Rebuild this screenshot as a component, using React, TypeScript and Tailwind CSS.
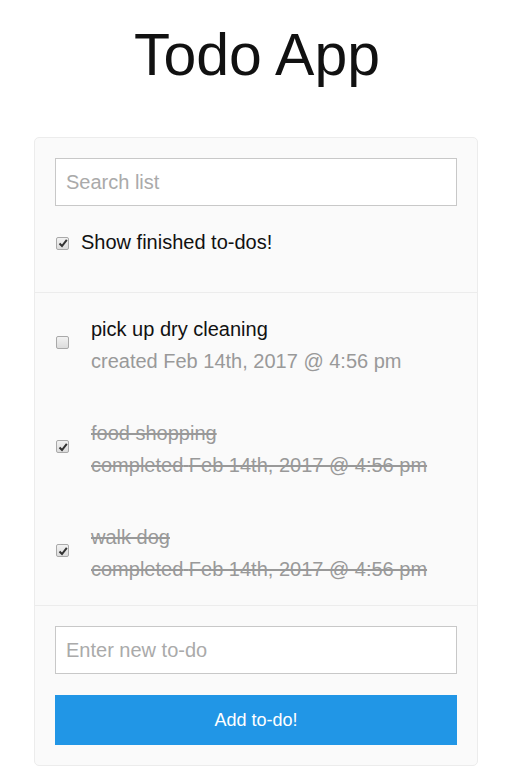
import React from "react";

const font = { fontFamily: '"Liberation Sans", Arial, sans-serif' };

function Box({ checked }: { checked: boolean }) {
  return (
    <span className="relative inline-flex size-[13px] shrink-0 items-center justify-center rounded-[2px] border border-[#a9a9a9] bg-gradient-to-b from-[#f2f2f2] to-[#dcdcdc]">
      {checked && (
        <svg viewBox="0 0 10 10" className="size-[10px]">
          <path d="M1.5 5.5 L4 8 L8.8 1.8" fill="none" stroke="#333" strokeWidth="2" />
        </svg>
      )}
    </span>
  );
}

function TodoRow({ title, date, done }: { title: string; date: string; done: boolean }) {
  return (
    <div className="flex items-center py-5">
      <div className="w-[36px] flex items-center pl-px pb-[5px]">
        <Box checked={done} />
      </div>
      <div className={done ? "text-[20px] leading-[32px] text-[#999] line-through" : "text-[20px] leading-[32px]"}>
        <div className={done ? "" : "text-[#111]"}>{title}</div>
        <div className="text-[#999]">
          {done ? "completed" : "created"} {date}
        </div>
      </div>
    </div>
  );
}

export default function App() {
  return (
    <div className="min-h-[776px] bg-white" style={font}>
      <h1 className="pt-[18px] pb-[45px] text-center text-[59px] leading-[74px] text-[#111]">Todo App</h1>

      <div className="ml-[34px] w-[444px] rounded-[5px] border border-[#ececec] bg-[#fafafa]">
        <div className="px-5 pt-5 pb-[34px] border-b border-[#ececec]">
          <input
            placeholder="Search list"
            className="h-[48px] w-full border border-[#c8c8c8] bg-white px-[10px] text-[20px] outline-none placeholder:text-[#aaa]"
            style={font}
          />
          <label className="mt-5 flex items-center text-[20px] leading-[32px] text-[#111]">
            <span className="w-[26px] flex items-center pl-px pt-[2px]">
              <Box checked />
            </span>
            Show finished to-dos!
          </label>
        </div>

        <div className="px-5">
          <TodoRow title="pick up dry cleaning" date="Feb 14th, 2017 @ 4:56 pm" done={false} />
          <TodoRow title="food shopping" date="Feb 14th, 2017 @ 4:56 pm" done />
          <TodoRow title="walk dog" date="Feb 14th, 2017 @ 4:56 pm" done />
        </div>

        <div className="border-t border-[#ececec] p-5">
          <input
            placeholder="Enter new to-do"
            className="h-[48px] w-full border border-[#c8c8c8] bg-white px-[10px] text-[20px] outline-none placeholder:text-[#aaa]"
            style={font}
          />
          <button className="mt-[21px] h-[50px] w-full bg-[#2196e6] text-[18px] text-white" style={font}>
            Add to-do!
          </button>
        </div>
      </div>
    </div>
  );
}
